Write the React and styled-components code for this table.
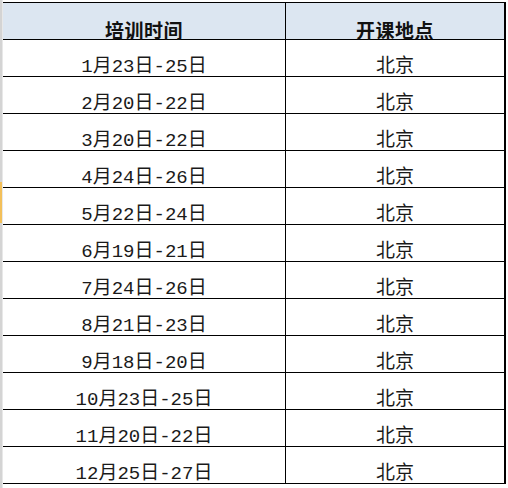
import React from "react";
import styled, { createGlobalStyle } from "styled-components";

const rows = [
  "1月23日-25日",
  "2月20日-22日",
  "3月20日-22日",
  "4月24日-26日",
  "5月22日-24日",
  "6月19日-21日",
  "7月24日-26日",
  "8月21日-23日",
  "9月18日-20日",
  "10月23日-25日",
  "11月20日-22日",
  "12月25日-27日",
];

const App = () => {
  return (
    <>
      <GlobalStyle />
      <Page>
        <Gutter>
          <Marker />
        </Gutter>
        <Sheet>
          <HeadCell>培训时间</HeadCell>
          <HeadCell $right>开课地点</HeadCell>
          {rows.map((date) => (
            <React.Fragment key={date}>
              <Cell>{date}</Cell>
              <Cell $right>北京</Cell>
            </React.Fragment>
          ))}
        </Sheet>
      </Page>
    </>
  );
};

export default App;

const GlobalStyle = createGlobalStyle`
  html, body {
    margin: 0;
    padding: 0;
    background: #ffffff;
  }
`;

const Page = styled.div`
  display: flex;
  width: 508px;
  height: 488px;
  overflow: hidden;
`;

const Gutter = styled.div`
  width: 2px;
  flex: none;
  background-color: #d4d4d4;
  border-right: 1px solid #e8e8e8;
  padding-top: 182px;
`;

const Marker = styled.div`
  height: 41px;
  background-color: #f3c05a;
`;

const Sheet = styled.div`
  display: grid;
  grid-template-columns: 282px 219px;
  grid-auto-rows: 37px;
  margin-top: 2px;
  align-self: flex-start;
  border-top: 1px solid #000;
  border-right: 2px solid #000;
`;

const HeadCell = styled.div`
  display: flex;
  align-items: flex-end;
  justify-content: center;
  padding-bottom: 1px;
  box-sizing: border-box;
  background-color: #dce6f1;
  border-bottom: 1px solid #000;
  border-left: ${(p) => (p.$right ? "1px solid #000" : "none")};
  font-family: "Noto Sans CJK SC", sans-serif;
  font-weight: 700;
  font-size: 19px;
  line-height: 0.85;
  letter-spacing: 0.5px;
  color: #111;
`;

const Cell = styled.div`
  display: flex;
  align-items: flex-end;
  justify-content: center;
  padding-bottom: 1px;
  box-sizing: border-box;
  border-bottom: 1px solid #000;
  border-left: ${(p) => (p.$right ? "1px solid #000" : "none")};
  font-family: "Liberation Mono", "Noto Sans CJK SC", monospace;
  font-size: 19px;
  line-height: 0.85;
  color: #1a1a1a;
`;
